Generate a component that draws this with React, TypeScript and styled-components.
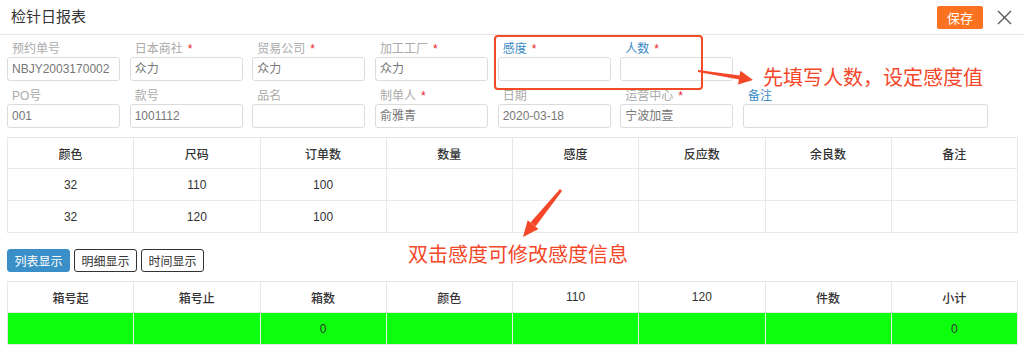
import React from "react";
import styled, { createGlobalStyle } from "styled-components";

const GlobalStyle = createGlobalStyle`
  html, body { margin: 0; padding: 0; background: #fff; }
  body { font-family: "Liberation Sans", "Noto Sans CJK SC", sans-serif; color: #333; }
  * { box-sizing: border-box; }
`;

const Page = styled.div`
  position: relative;
  width: 1024px;
  height: 356px;
  overflow: hidden;
`;

const Header = styled.div`
  display: flex;
  align-items: center;
  height: 35px;
  padding: 0 12px 0 11px;
  border-bottom: 1px solid #e6e6e6;
`;

const Title = styled.div`
  flex: 1;
  font-size: 15px;
  color: #333;
  line-height: 20px;
`;

const SaveButton = styled.button`
  width: 46px;
  height: 23px;
  border: none;
  border-radius: 2px;
  background: #fb7320;
  color: #fff;
  font-family: inherit;
  font-size: 13px;
  padding: 0;
  margin-right: 14px;
`;

const CloseIcon = styled.svg`
  width: 15px;
  height: 15px;
  display: block;
`;

const Form = styled.div`
  display: grid;
  grid-template-columns: repeat(6, 113px) 245px;
  column-gap: 9.67px;
  row-gap: 7px;
  padding: 6px 0 0 7px;
`;

const Field = styled.div`
  display: flex;
  flex-direction: column;
`;

const Label = styled.div<{ $blue?: boolean }>`
  height: 16px;
  line-height: 16px;
  font-size: 12px;
  padding-left: 5px;
  color: ${(p) => (p.$blue ? "#3b8bc6" : "#aaa")};
  white-space: nowrap;
`;

const Star = styled.span`
  color: #e8222a;
  margin-left: 5px;
`;

const InputBox = styled.div`
  height: 24px;
  border: 1px solid #dcdcdc;
  border-radius: 3px;
  padding: 0 4px;
  font-size: 12px;
  line-height: 22px;
  color: #777;
  white-space: nowrap;
  overflow: hidden;
`;

const Table = styled.table<{ $top: number }>`
  width: 1011px;
  margin: ${(p) => p.$top}px 0 0 7px;
  border-collapse: collapse;
  table-layout: fixed;
  font-size: 12px;
  color: #333;
`;

const Th = styled.th`
  height: 31px;
  border: 1px solid #e8e8e8;
  font-weight: 500;
  text-align: center;
  padding: 0;
`;

const Td = styled.td<{ $green?: boolean }>`
  height: 32px;
  border: 1px solid #e8e8e8;
  text-align: center;
  padding: 0;
  background: ${(p) => (p.$green ? "#0cff0c" : "transparent")};
`;

const ButtonRow = styled.div`
  display: flex;
  gap: 4px;
  margin: 16px 0 0 7px;
`;

const ViewButton = styled.button<{ $active?: boolean }>`
  width: 63px;
  height: 23px;
  padding: 0;
  font-family: inherit;
  font-size: 12px;
  border-radius: 3px;
  border: 1px solid ${(p) => (p.$active ? "#3a8fc8" : "#333")};
  background: ${(p) => (p.$active ? "#3a8fc8" : "#fff")};
  color: ${(p) => (p.$active ? "#fff" : "#333")};
`;

const HighlightBox = styled.div`
  position: absolute;
  left: 494px;
  top: 35px;
  width: 209px;
  height: 55px;
  border: 2px solid #f24b25;
  border-radius: 4px;
  pointer-events: none;
`;

const Note = styled.div<{ $left: number; $top: number }>`
  position: absolute;
  left: ${(p) => p.$left}px;
  top: ${(p) => p.$top}px;
  font-size: 20px;
  line-height: 24px;
  color: #f4472a;
  white-space: nowrap;
`;

const ArrowLayer = styled.svg`
  position: absolute;
  left: 0;
  top: 0;
  width: 1024px;
  height: 356px;
  pointer-events: none;
`;

type F = { label: string; value?: string; req?: boolean; blue?: boolean };

const row1: F[] = [
  { label: "预约单号", value: "NBJY2003170002" },
  { label: "日本商社", value: "众力", req: true },
  { label: "贸易公司", value: "众力", req: true },
  { label: "加工工厂", value: "众力", req: true },
  { label: "感度", value: "", req: true, blue: true },
  { label: "人数", value: "", req: true, blue: true },
];

const row2: F[] = [
  { label: "PO号", value: "001" },
  { label: "款号", value: "1001112" },
  { label: "品名", value: "" },
  { label: "制单人", value: "俞雅青", req: true },
  { label: "日期", value: "2020-03-18" },
  { label: "运营中心", value: "宁波加壹", req: true },
  { label: "备注", value: "", blue: true },
];

const head1 = ["颜色", "尺码", "订单数", "数量", "感度", "反应数", "余良数", "备注"];
const rows1 = [
  ["32", "110", "100", "", "", "", "", ""],
  ["32", "120", "100", "", "", "", "", ""],
];
const head2 = ["箱号起", "箱号止", "箱数", "颜色", "110", "120", "件数", "小计"];
const row2data = ["", "", "0", "", "", "", "", "0"];

function FieldView({ f }: { f: F }) {
  return (
    <Field>
      <Label $blue={f.blue}>
        {f.label}
        {f.req && <Star>*</Star>}
      </Label>
      <InputBox>{f.value}</InputBox>
    </Field>
  );
}

export default function App() {
  return (
    <>
      <GlobalStyle />
      <Page>
        <Header>
          <Title>检针日报表</Title>
          <SaveButton>保存</SaveButton>
          <CloseIcon viewBox="0 0 15 15">
            <path d="M1 1 L14 14 M14 1 L1 14" stroke="#555" strokeWidth="1.3" fill="none" />
          </CloseIcon>
        </Header>
        <Form>
          {row1.map((f) => (
            <FieldView key={f.label} f={f} />
          ))}
          <div />
          {row2.map((f) => (
            <FieldView key={f.label} f={f} />
          ))}
        </Form>
        <Table $top={9}>
          <thead>
            <tr>
              {head1.map((h) => (
                <Th key={h}>{h}</Th>
              ))}
            </tr>
          </thead>
          <tbody>
            {rows1.map((r, i) => (
              <tr key={i}>
                {r.map((c, j) => (
                  <Td key={j}>{c}</Td>
                ))}
              </tr>
            ))}
          </tbody>
        </Table>
        <ButtonRow>
          <ViewButton $active>列表显示</ViewButton>
          <ViewButton>明细显示</ViewButton>
          <ViewButton>时间显示</ViewButton>
        </ButtonRow>
        <Table $top={9}>
          <thead>
            <tr>
              {head2.map((h) => (
                <Th key={h}>{h}</Th>
              ))}
            </tr>
          </thead>
          <tbody>
            <tr>
              {row2data.map((c, j) => (
                <Td key={j} $green>
                  {c}
                </Td>
              ))}
            </tr>
          </tbody>
        </Table>

        <HighlightBox />
        <Note $left={763} $top={66}>先填写人数，设定感度值</Note>
        <Note $left={408} $top={243}>双击感度可修改感度信息</Note>
        <ArrowLayer viewBox="0 0 1024 356">
          <polygon points="698,70 740,75.5 739.5,79.5 698,72" fill="#f4472a" />
          <polygon points="753,80 740.4,70.7 738,84.5" fill="#f4472a" />
          <polygon points="560,189 562,191 535.5,226.5 530.5,222.5" fill="#f4472a" />
          <polygon points="523,237 527.7,220.2 538.5,229" fill="#f4472a" />
        </ArrowLayer>
      </Page>
    </>
  );
}
